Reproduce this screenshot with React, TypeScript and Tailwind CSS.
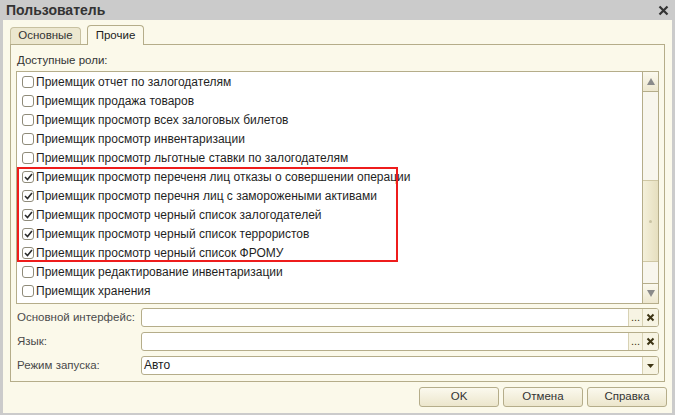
import React from "react";

const roles: { name: string; checked: boolean }[] = [
  { name: "Приемщик отчет по залогодателям", checked: false },
  { name: "Приемщик продажа товаров", checked: false },
  { name: "Приемщик просмотр всех залоговых билетов", checked: false },
  { name: "Приемщик просмотр инвентаризации", checked: false },
  { name: "Приемщик просмотр льготные ставки по залогодателям", checked: false },
  { name: "Приемщик просмотр переченя лиц отказы о совершении операции", checked: true },
  { name: "Приемщик просмотр перечня лиц с заморожеными активами", checked: true },
  { name: "Приемщик просмотр черный список залогодателей", checked: true },
  { name: "Приемщик просмотр черный список террористов", checked: true },
  { name: "Приемщик просмотр черный список ФРОМУ", checked: true },
  { name: "Приемщик редактирование инвентаризации", checked: false },
  { name: "Приемщик хранения", checked: false },
  { name: "", checked: false },
];

function CheckBox({ checked }: { checked: boolean }) {
  return (
    <span className="flex h-[12px] w-[12px] shrink-0 items-center justify-center rounded-[3px] border border-[#8f8b7a] bg-white">
      {checked && (
        <svg width="9" height="8" viewBox="0 0 9 8">
          <path d="M1 4 L3.5 6.5 L8 1" fill="none" stroke="#2b2b2b" strokeWidth="1.6" />
        </svg>
      )}
    </span>
  );
}

function ClearX() {
  return (
    <svg width="9" height="9" viewBox="0 0 9 9">
      <path d="M1.5 1.5 L7.5 7.5 M7.5 1.5 L1.5 7.5" stroke="#3d3414" strokeWidth="2" />
    </svg>
  );
}

function Field({ label, value, kind }: { label: string; value?: string; kind: "select" | "choice" }) {
  return (
    <div className="flex h-[19px] items-center">
      <span className="w-[124px] text-[11.5px] text-[#4a4a4a]">{label}</span>
      <div className="flex h-[19px] flex-1 overflow-hidden rounded-[3px] border border-[#b5ad8a] bg-white">
        <span className="flex-1 pl-[2px] text-[12px] leading-[17px] text-[#222]">{value}</span>
        {kind === "choice" ? (
          <>
            <span className="flex w-[14px] items-end justify-center border-l border-[#d8d2b4] bg-[#f7f4e3] pb-[3px] text-[11px] leading-none text-[#3d3414]">
              ...
            </span>
            <span className="flex w-[16px] items-center justify-center border-l border-[#d8d2b4] bg-[#f7f4e3]">
              <ClearX />
            </span>
          </>
        ) : (
          <span className="flex w-[16px] items-center justify-center border-l border-[#d8d2b4] bg-[#f7f4e3]">
            <svg width="7" height="4" viewBox="0 0 7 4">
              <path d="M0 0 H7 L3.5 4 Z" fill="#3d3414" />
            </svg>
          </span>
        )}
      </div>
    </div>
  );
}

function Btn({ children }: { children: React.ReactNode }) {
  return (
    <button className="flex h-[20px] w-[80px] items-center justify-center rounded-[3px] border border-[#b5ad8a] bg-gradient-to-b from-[#fbf9ee] to-[#ece6cc] text-[11.5px] text-[#333]">
      {children}
    </button>
  );
}

export default function App() {
  return (
    <div className="flex h-[415px] w-[675px] flex-col bg-[#cbcbcb] font-['Liberation_Sans',Arial,sans-serif]">
      <div className="flex h-[20px] shrink-0 items-center justify-between pl-[6px] pr-[6px]">
        <span className="text-[14px] font-bold text-[#333]">Пользователь</span>
        <svg width="11" height="11" viewBox="0 0 11 11">
          <path d="M1.5 1.5 L9.5 9.5 M9.5 1.5 L1.5 9.5" stroke="#333" strokeWidth="2.2" />
        </svg>
      </div>

      <div className="mx-[3px] mb-[2px] flex flex-1 flex-col bg-[#fbf9ea]">
        <div className="flex h-[24px] items-end gap-[6px] pl-[7px] pt-[5px]">
          <div className="flex h-[17px] w-[71px] items-center justify-center rounded-t-[4px] border border-b-0 border-[#c8c1a0] bg-[#ece7cf] text-[11.5px] text-[#333]">
            Основные
          </div>
          <div className="relative z-10 -mb-px flex h-[20px] w-[57px] items-center justify-center rounded-t-[4px] border border-b-0 border-[#b5ad8a] bg-[#fbf9ea] text-[11.5px] text-[#222]">
            Прочие
          </div>
        </div>

        <div className="ml-[7px] mr-[7px] flex h-[338px] flex-col border border-[#b5ad8a] px-[5px]">
          <div className="flex h-[26px] items-center pl-[1px] pt-[6px] text-[11.5px] text-[#333]">Доступные роли:</div>

          <div className="flex h-[233px] border border-[#b5ad8a] bg-white">
            <div className="relative flex-1 overflow-hidden">
              <div className="flex flex-col">
                {roles.map((r, i) => (
                  <div key={i} className="flex h-[19px] shrink-0 items-center gap-[2px] pl-[5px]">
                    <CheckBox checked={r.checked} />
                    <span className="whitespace-nowrap text-[12px] text-[#1f1f1f]">{r.name}</span>
                  </div>
                ))}
              </div>
              <div className="absolute left-[0px] top-[95px] h-[95px] w-[381px] border-2 border-[#ee1c1c]" />
            </div>

            <div className="flex w-[16px] flex-col border-l border-[#b5ad8a] bg-[#f8f6ed]">
              <div className="flex h-[20px] items-center justify-center border-b border-[#b5ad8a] bg-gradient-to-b from-[#fbf9ee] to-[#ede7cf]">
                <svg width="8" height="7" viewBox="0 0 8 7">
                  <path d="M4 0 L8 7 H0 Z" fill="#8a8a8a" />
                </svg>
              </div>
              <div className="h-[88px]" />
              <div className="flex h-[82px] items-center justify-center border-y border-[#cfc7a4] bg-gradient-to-r from-[#f4f0da] to-[#e6dfbf]">
                <span className="h-[3px] w-[3px] rounded-full bg-[#c9c2a2]" />
              </div>
              <div className="flex-1" />
              <div className="flex h-[20px] items-center justify-center border-t border-[#b5ad8a] bg-gradient-to-b from-[#fbf9ee] to-[#ede7cf]">
                <svg width="8" height="7" viewBox="0 0 8 7">
                  <path d="M0 0 H8 L4 7 Z" fill="#8a8a8a" />
                </svg>
              </div>
            </div>
          </div>

          <div className="mt-[4px] flex flex-col gap-[5px] pl-[1px]">
            <Field label="Основной интерфейс:" kind="choice" />
            <Field label="Язык:" kind="choice" />
            <Field label="Режим запуска:" value="Авто" kind="select" />
          </div>
        </div>

        <div className="flex justify-end gap-[4px] pr-[5px] pt-[5px]">
          <Btn>OK</Btn>
          <Btn>Отмена</Btn>
          <Btn>Справка</Btn>
        </div>
      </div>
    </div>
  );
}
